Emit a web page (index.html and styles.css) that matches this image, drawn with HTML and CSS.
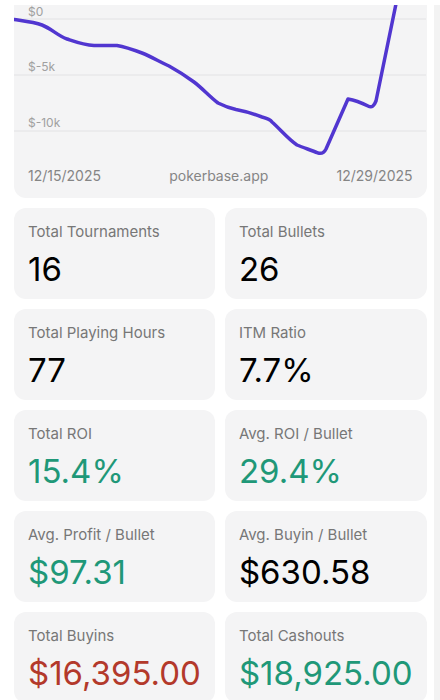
FILE: index.html
```html
<!DOCTYPE html>
<html lang="en">
  <head>
    <meta charset="UTF-8" />
    <meta name="viewport" content="width=device-width, initial-scale=1.0" />
    <title>Stats</title>
    <link rel="stylesheet" href="styles.css">
  </head>

  <body>
    <div class="screen">
      <div class="page">
        <div class="chart">
          <svg class="plot" width="412" height="162" viewBox="0 0 412 162">
            <line class="grid" x1="0" y1="14" x2="412" y2="14" />
            <line class="grid" x1="0" y1="70" x2="412" y2="70" />
            <line class="grid" x1="0" y1="126" x2="412" y2="126" />
            <text class="axis" x="14" y="10.5">$0</text>
            <text class="axis" x="14" y="66">$-5k</text>
            <text class="axis" x="14" y="122">$-10k</text>
            <path class="curve" d="M0 14.5 C10 16 20 17 28 20 C38 24 44 31 53 34 C62 37 70 40 80 40.5 L103 40.5 C112 42 120 45 128 48 C138 52 146 57 155 61 C164 66 172 71 180 77 C188 83 196 92 204 98 C210 101 215 103 222 104.5 C230 106 240 109 248 112 C252 113 256 114 258 117 C266 124 274 134 283 140 C290 143 297 145 304 148 C308 149 310 148 312 144 L334 94 C340 95 348 98 354 101 C358 103 360 101 362 96 L383 -6" />
          </svg>
          <div class="dates">
            <span>12/15/2025</span>
            <span>pokerbase.app</span>
            <span>12/29/2025</span>
          </div>
        </div>

        <div class="stats">
          <div class="stat">
            <div class="label">Total Tournaments</div>
            <div class="value">16</div>
          </div>
          <div class="stat">
            <div class="label">Total Bullets</div>
            <div class="value">26</div>
          </div>
          <div class="stat">
            <div class="label">Total Playing Hours</div>
            <div class="value">77</div>
          </div>
          <div class="stat">
            <div class="label">ITM Ratio</div>
            <div class="value">7.7%</div>
          </div>
          <div class="stat">
            <div class="label">Total ROI</div>
            <div class="value up">15.4%</div>
          </div>
          <div class="stat">
            <div class="label">Avg. ROI / Bullet</div>
            <div class="value up">29.4%</div>
          </div>
          <div class="stat">
            <div class="label">Avg. Profit / Bullet</div>
            <div class="value up">$97.31</div>
          </div>
          <div class="stat">
            <div class="label">Avg. Buyin / Bullet</div>
            <div class="value">$630.58</div>
          </div>
          <div class="stat">
            <div class="label">Total Buyins</div>
            <div class="value down">$16,395.00</div>
          </div>
          <div class="stat">
            <div class="label">Total Cashouts</div>
            <div class="value up">$18,925.00</div>
          </div>
        </div>
      </div>
      <div class="scrollbar"></div>
    </div>
  </body>
</html>
```

FILE: styles.css
```css
    html,
    body {
      margin: 0;
      height: 100%;
      overflow: hidden;
      background: #fff;
      font-family: Inter, "Noto Sans", sans-serif;
    }
    .screen {
      display: flex;
      height: 100%;
    }
    .page {
      flex: 1;
      padding: 5px 7px 0 14px;
    }
    .scrollbar {
      width: 7px;
      margin-top: 5px;
      background: #f3f3f3;
    }
    .chart {
      background: #f4f4f5;
      border-radius: 0 0 12px 12px;
      overflow: hidden;
    }
    .plot {
      display: block;
    }
    .grid {
      stroke: #e2e2e4;
      stroke-width: 1;
    }
    .axis {
      fill: #a0a0a0;
      font-size: 12px;
      font-family: Inter, sans-serif;
    }
    .curve {
      fill: none;
      stroke: #5136d0;
      stroke-width: 3.5;
      stroke-linecap: round;
      stroke-linejoin: round;
    }
    .dates {
      display: flex;
      justify-content: space-between;
      padding: 0 14px 14px;
      font-size: 14px;
      line-height: 17px;
      color: #858585;
    }
    .stats {
      display: grid;
      grid-template-columns: 1fr 1fr;
      gap: 10px;
      margin-top: 10px;
    }
    .stat {
      background: #f4f4f5;
      border-radius: 12px;
      height: 91px;
      box-sizing: border-box;
      padding: 14px 14px 0;
    }
    .label {
      font-size: 15px;
      color: #777;
    }
    .value {
      margin-top: 8px;
      font-size: 33px;
      line-height: 40px;
      color: #000;
    }
    .up {
      color: #1f9878;
    }
    .down {
      color: #b3392b;
    }
```
